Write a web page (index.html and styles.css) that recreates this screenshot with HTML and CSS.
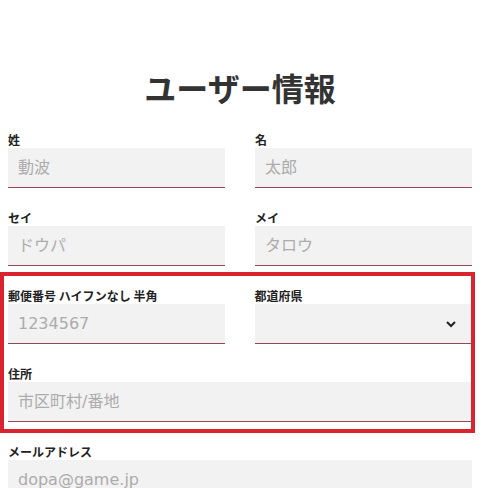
FILE: index.html
```html
<!DOCTYPE html>
<html lang="ja">
<head>
<meta charset="utf-8">
<title>ユーザー情報</title>
<link rel="stylesheet" href="styles.css">
</head>
<body>
<main class="page">
  <h1 class="title">ユーザー情報</h1>
  <form class="form">
    <div class="row">
      <div class="field">
        <label class="label">姓</label>
        <input class="input" type="text" placeholder="動波">
      </div>
      <div class="field">
        <label class="label">名</label>
        <input class="input" type="text" placeholder="太郎">
      </div>
    </div>
    <div class="row">
      <div class="field">
        <label class="label">セイ</label>
        <input class="input" type="text" placeholder="ドウパ">
      </div>
      <div class="field">
        <label class="label">メイ</label>
        <input class="input" type="text" placeholder="タロウ">
      </div>
    </div>
    <div class="highlight">
      <div class="row">
        <div class="field">
          <label class="label">郵便番号 ハイフンなし 半角</label>
          <input class="input" type="text" placeholder="1234567">
        </div>
        <div class="field">
          <label class="label">都道府県</label>
          <div class="select-wrap">
            <select class="input select"><option></option></select>
            <svg class="chevron" width="12" height="8" viewBox="0 0 12 8"><path d="M2 2 L6 6 L10 2" fill="none" stroke="#222" stroke-width="2"/></svg>
          </div>
        </div>
      </div>
      <div class="field">
        <label class="label">住所</label>
        <input class="input" type="text" placeholder="市区町村/番地">
      </div>
    </div>
    <div class="field">
      <label class="label">メールアドレス</label>
      <input class="input" type="text" placeholder="dopa@game.jp">
    </div>
  </form>
</main>
</body>
</html>
```
FILE: styles.css
```css
html, body {
  margin: 0;
  padding: 0;
  background: #fff;
}
body {
  font-family: "Noto Sans CJK JP", "Noto Sans", sans-serif;
  color: #222;
}
.page {
  padding: 63px 13px 0 8px;
}
.title {
  margin: 0 0 20px;
  font-size: 32px;
  line-height: 48px;
  font-weight: 700;
  text-align: center;
  color: #333;
}
.form {
  display: flex;
  flex-direction: column;
  gap: 21px;
}
.row {
  display: grid;
  grid-template-columns: 1fr 1fr;
  column-gap: 30px;
}
.field {
  display: flex;
  flex-direction: column;
  min-width: 0;
}
.label {
  font-size: 12px;
  line-height: 17px;
  font-weight: 700;
  color: #222;
}
.input {
  box-sizing: border-box;
  width: 100%;
  height: 40px;
  margin: 0;
  border: none;
  border-bottom: 1px solid #94475a;
  border-radius: 0;
  background: #f2f2f2;
  padding: 0 10px;
  font-family: "DejaVu Sans", "Noto Sans CJK JP", sans-serif;
  font-size: 16px;
  color: #222;
  outline: none;
}
.input::placeholder {
  color: #acacac;
}
.select-wrap {
  position: relative;
}
.select {
  appearance: none;
  -webkit-appearance: none;
}
.chevron {
  position: absolute;
  right: 14px;
  top: 16px;
}
.highlight {
  margin: -15px -3px -11px -8px;
  padding: 11px 0 7px 4px;
  border: 4px solid #d9232e;
  display: flex;
  flex-direction: column;
  gap: 21px;
}
```
